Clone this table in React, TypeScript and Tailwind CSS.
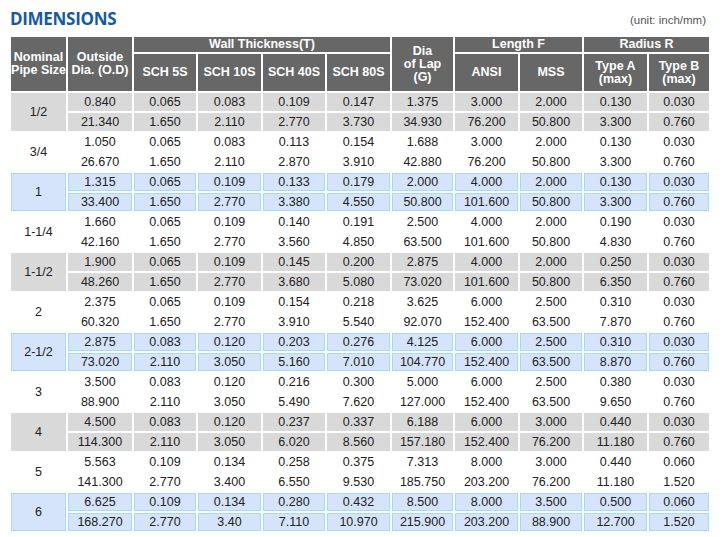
import React from "react";

type Group = { size: string; tone: "gray" | "white" | "blue"; a: string[]; b: string[] };

const groups: Group[] = [
  { size: "1/2", tone: "gray", a: ["0.840", "0.065", "0.083", "0.109", "0.147", "1.375", "3.000", "2.000", "0.130", "0.030"], b: ["21.340", "1.650", "2.110", "2.770", "3.730", "34.930", "76.200", "50.800", "3.300", "0.760"] },
  { size: "3/4", tone: "white", a: ["1.050", "0.065", "0.083", "0.113", "0.154", "1.688", "3.000", "2.000", "0.130", "0.030"], b: ["26.670", "1.650", "2.110", "2.870", "3.910", "42.880", "76.200", "50.800", "3.300", "0.760"] },
  { size: "1", tone: "blue", a: ["1.315", "0.065", "0.109", "0.133", "0.179", "2.000", "4.000", "2.000", "0.130", "0.030"], b: ["33.400", "1.650", "2.770", "3.380", "4.550", "50.800", "101.600", "50.800", "3.300", "0.760"] },
  { size: "1-1/4", tone: "white", a: ["1.660", "0.065", "0.109", "0.140", "0.191", "2.500", "4.000", "2.000", "0.190", "0.030"], b: ["42.160", "1.650", "2.770", "3.560", "4.850", "63.500", "101.600", "50.800", "4.830", "0.760"] },
  { size: "1-1/2", tone: "gray", a: ["1.900", "0.065", "0.109", "0.145", "0.200", "2.875", "4.000", "2.000", "0.250", "0.030"], b: ["48.260", "1.650", "2.770", "3.680", "5.080", "73.020", "101.600", "50.800", "6.350", "0.760"] },
  { size: "2", tone: "white", a: ["2.375", "0.065", "0.109", "0.154", "0.218", "3.625", "6.000", "2.500", "0.310", "0.030"], b: ["60.320", "1.650", "2.770", "3.910", "5.540", "92.070", "152.400", "63.500", "7.870", "0.760"] },
  { size: "2-1/2", tone: "blue", a: ["2.875", "0.083", "0.120", "0.203", "0.276", "4.125", "6.000", "2.500", "0.310", "0.030"], b: ["73.020", "2.110", "3.050", "5.160", "7.010", "104.770", "152.400", "63.500", "8.870", "0.760"] },
  { size: "3", tone: "white", a: ["3.500", "0.083", "0.120", "0.216", "0.300", "5.000", "6.000", "2.500", "0.380", "0.030"], b: ["88.900", "2.110", "3.050", "5.490", "7.620", "127.000", "152.400", "63.500", "9.650", "0.760"] },
  { size: "4", tone: "gray", a: ["4.500", "0.083", "0.120", "0.237", "0.337", "6.188", "6.000", "3.000", "0.440", "0.030"], b: ["114.300", "2.110", "3.050", "6.020", "8.560", "157.180", "152.400", "76.200", "11.180", "0.760"] },
  { size: "5", tone: "white", a: ["5.563", "0.109", "0.134", "0.258", "0.375", "7.313", "8.000", "3.000", "0.440", "0.060"], b: ["141.300", "2.770", "3.400", "6.550", "9.530", "185.750", "203.200", "76.200", "11.180", "1.520"] },
  { size: "6", tone: "blue", a: ["6.625", "0.109", "0.134", "0.280", "0.432", "8.500", "8.000", "3.500", "0.500", "0.060"], b: ["168.270", "2.770", "3.40", "7.110", "10.970", "215.900", "203.200", "88.900", "12.700", "1.520"] },
];

const toneClass: Record<Group["tone"], string> = {
  gray: "bg-[#d9d9d9]",
  white: "bg-white",
  blue: "bg-[#d5e4fb] border border-[#a4dbf5]",
};

const th = "bg-[#676767] text-white font-bold text-[12.5px] leading-[13px] p-0 text-center align-middle";

export default function App() {
  return (
    <div className="w-[723px] h-[537px] bg-white overflow-hidden" style={{ fontFamily: '"Liberation Sans", Arial, sans-serif' }}>
      <div className="flex items-end justify-between pl-[10px] pr-[17px] h-[35px] pb-[7px]">
        <div className="text-[17px] leading-[18px] font-bold text-[#16599f] tracking-[-0.3px]" style={{ fontFamily: '"Open Sans", sans-serif' }}>
          DIMENSIONS
        </div>
        <div className="text-[11.5px] leading-[13px] text-[#555] pb-[1px]">(unit: inch/mm)</div>
      </div>
      <table className="ml-[9px] table-fixed border-separate border-spacing-[2px] text-[#222] text-[12.5px]">
        <colgroup>
          <col className="w-[55px]" />
          <col className="w-[64px]" />
          <col className="w-[62px]" />
          <col className="w-[63px]" />
          <col className="w-[62px]" />
          <col className="w-[63px]" />
          <col className="w-[61px]" />
          <col className="w-[63px]" />
          <col className="w-[62px]" />
          <col className="w-[63px]" />
          <col className="w-[60px]" />
        </colgroup>
        <thead>
          <tr className="h-[15px]">
            <th rowSpan={2} className={th}>Nominal<br />Pipe Size</th>
            <th rowSpan={2} className={th}>Outside<br />Dia. (O.D)</th>
            <th colSpan={4} className={th}>Wall Thickness(T)</th>
            <th rowSpan={2} className={th}>Dia<br />of Lap<br />(G)</th>
            <th colSpan={2} className={th}>Length F</th>
            <th colSpan={2} className={th}>Radius R</th>
          </tr>
          <tr className="h-[37px]">
            <th className={th}>SCH 5S</th>
            <th className={th}>SCH 10S</th>
            <th className={th}>SCH 40S</th>
            <th className={th}>SCH 80S</th>
            <th className={th}>ANSI</th>
            <th className={th}>MSS</th>
            <th className={th}>Type A<br />(max)</th>
            <th className={th}>Type B<br />(max)</th>
          </tr>
        </thead>
        <tbody>
          {groups.map((g) => (
            <React.Fragment key={g.size}>
              <tr className="h-[18px]">
                <td rowSpan={2} className={`${toneClass[g.tone]} p-0 text-center align-middle leading-[14px]`}>{g.size}</td>
                {g.a.map((v, i) => (
                  <td key={i} className={`${toneClass[g.tone]} p-0 text-center align-middle leading-[14px]`}>{v}</td>
                ))}
              </tr>
              <tr className="h-[18px]">
                {g.b.map((v, i) => (
                  <td key={i} className={`${toneClass[g.tone]} p-0 text-center align-middle leading-[14px]`}>{v}</td>
                ))}
              </tr>
            </React.Fragment>
          ))}
        </tbody>
      </table>
    </div>
  );
}
